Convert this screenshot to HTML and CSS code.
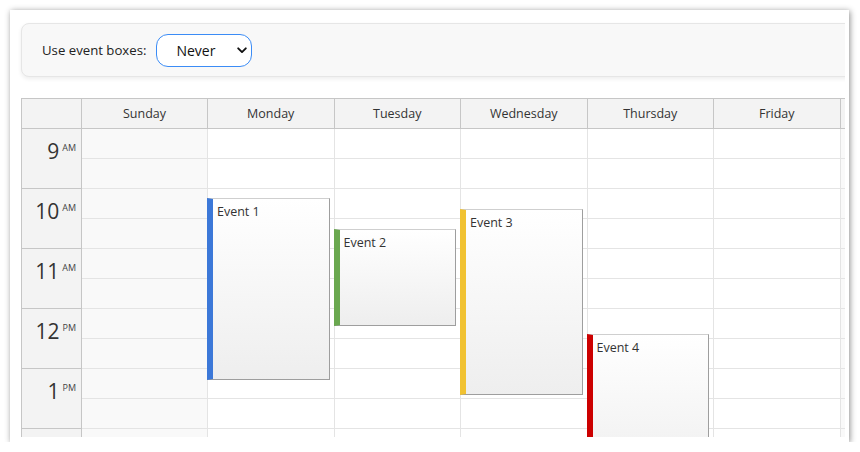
FILE: index.html
```html
<!DOCTYPE html>
<html lang="en">
<head>
    <meta charset="UTF-8">
    <meta name="viewport" content="width=device-width, initial-scale=1.0">
    <title>Calendar - Event Boxes</title>
    <link rel="stylesheet" href="styles.css">
</head>
<body>
    <div class="frame">
        <div class="viewport">
            <div class="page">
                <div class="toolbar">
                    <label for="boxes">Use event boxes:</label>
                    <span class="select-wrap">
                        <select id="boxes">
                            <option>Never</option>
                            <option>Always</option>
                        </select>
                        <svg class="chevron" width="10" height="7" viewBox="0 0 10 7">
                            <path d="M1.2 1.3 L5 5.1 L8.8 1.3" fill="none" stroke="#111" stroke-width="1.9" stroke-linecap="round" stroke-linejoin="round"/>
                        </svg>
                    </span>
                </div>

                <div class="calendar">
                    <div class="cal-head">
                        <div class="corner"></div>
                        <div class="day-head">Sunday</div>
                        <div class="day-head">Monday</div>
                        <div class="day-head">Tuesday</div>
                        <div class="day-head">Wednesday</div>
                        <div class="day-head">Thursday</div>
                        <div class="day-head">Friday</div>
                        <!-- saturday is scrolled out of view -->
                        <div class="day-head"></div>
                    </div>

                    <div class="cal-body">
                        <div class="time-col">
                            <div class="hour"><span class="h">9</span><span class="ampm">AM</span></div>
                            <div class="hour"><span class="h">10</span><span class="ampm">AM</span></div>
                            <div class="hour"><span class="h">11</span><span class="ampm">AM</span></div>
                            <div class="hour"><span class="h">12</span><span class="ampm">PM</span></div>
                            <div class="hour"><span class="h">1</span><span class="ampm">PM</span></div>
                            <div class="hour"></div>
                        </div>

                        <div class="day-col weekend">
                            <div class="slot"></div><div class="slot"></div><div class="slot"></div><div class="slot"></div>
                            <div class="slot"></div><div class="slot"></div><div class="slot"></div><div class="slot"></div>
                            <div class="slot"></div><div class="slot"></div><div class="slot"></div><div class="slot"></div>
                        </div>

                        <div class="day-col">
                            <div class="slot"></div><div class="slot"></div><div class="slot"></div><div class="slot"></div>
                            <div class="slot"></div><div class="slot"></div><div class="slot"></div><div class="slot"></div>
                            <div class="slot"></div><div class="slot"></div><div class="slot"></div><div class="slot"></div>
                            <div class="event blue" style="top: 69px; height: 182px;">Event 1</div>
                        </div>

                        <div class="day-col">
                            <div class="slot"></div><div class="slot"></div><div class="slot"></div><div class="slot"></div>
                            <div class="slot"></div><div class="slot"></div><div class="slot"></div><div class="slot"></div>
                            <div class="slot"></div><div class="slot"></div><div class="slot"></div><div class="slot"></div>
                            <div class="event green" style="top: 100px; height: 97px;">Event 2</div>
                        </div>

                        <div class="day-col">
                            <div class="slot"></div><div class="slot"></div><div class="slot"></div><div class="slot"></div>
                            <div class="slot"></div><div class="slot"></div><div class="slot"></div><div class="slot"></div>
                            <div class="slot"></div><div class="slot"></div><div class="slot"></div><div class="slot"></div>
                            <div class="event yellow" style="top: 80px; height: 186px;">Event 3</div>
                        </div>

                        <div class="day-col">
                            <div class="slot"></div><div class="slot"></div><div class="slot"></div><div class="slot"></div>
                            <div class="slot"></div><div class="slot"></div><div class="slot"></div><div class="slot"></div>
                            <div class="slot"></div><div class="slot"></div><div class="slot"></div><div class="slot"></div>
                            <div class="event red" style="top: 205px; height: 150px;">Event 4</div>
                        </div>

                        <div class="day-col">
                            <div class="slot"></div><div class="slot"></div><div class="slot"></div><div class="slot"></div>
                            <div class="slot"></div><div class="slot"></div><div class="slot"></div><div class="slot"></div>
                            <div class="slot"></div><div class="slot"></div><div class="slot"></div><div class="slot"></div>
                        </div>

                        <div class="day-col weekend">
                            <div class="slot"></div><div class="slot"></div><div class="slot"></div><div class="slot"></div>
                            <div class="slot"></div><div class="slot"></div><div class="slot"></div><div class="slot"></div>
                            <div class="slot"></div><div class="slot"></div><div class="slot"></div><div class="slot"></div>
                        </div>
                    </div>
                </div>
            </div>
        </div>
    </div>
</body>
</html>
```

FILE: styles.css
```css
:root {
    --text-color: #333;
    --head-bg: #f3f3f3;
    --weekend-bg: #f9f9f9;
    --head-line: #c6c6c6;
    --grid-line: #e4e4e4;
    --accent-color: #3b8cf6;
}

body {
    font-family: "Open Sans", "Noto Sans", sans-serif;
    color: var(--text-color);
    background-color: #fff;
    margin: 0;
    padding: 0;
}
.frame {
    margin: 10px 0 0 10px;
    width: 839px;
    height: 432px;
    background-color: #fff;
    box-shadow: 1px 1px 6px rgba(0, 0, 0, 0.45);
}
.viewport {
    width: 835px;
    height: 427px;
    overflow: hidden;
}
.page {
    width: 947px;
    padding: 13px 0 0 11px;
}

/* toolbar */
.toolbar {
    display: flex;
    align-items: center;
    gap: 10px;
    height: 54px;
    box-sizing: border-box;
    padding-left: 20px;
    background-color: #f8f8f8;
    border: 1px solid #e6e6e6;
    border-radius: 8px;
    box-shadow: 0 2px 4px rgba(0, 0, 0, 0.07);
    font-size: 13.2px;
    color: #222;
}
.select-wrap {
    position: relative;
    display: inline-block;
}
select {
    appearance: none;
    -webkit-appearance: none;
    width: 96px;
    height: 33px;
    padding: 0 0 0 19px;
    border: 1px solid var(--accent-color);
    border-radius: 12px;
    background-color: #fff;
    font-family: "Open Sans", "Noto Sans", sans-serif;
    font-size: 14px;
    color: #111;
    outline: none;
}
.chevron {
    position: absolute;
    right: 5px;
    top: 13px;
    pointer-events: none;
}

/* calendar */
.calendar {
    margin-top: 21px;
    border-top: 1px solid var(--head-line);
    border-left: 1px solid var(--head-line);
}
.cal-head, .cal-body {
    display: grid;
    grid-template-columns: 60px 126px repeat(6, 126.5px);
}
.corner, .day-head {
    height: 30px;
    box-sizing: border-box;
    background-color: var(--head-bg);
    border-right: 1px solid var(--head-line);
    border-bottom: 1px solid var(--head-line);
}
.day-head {
    display: flex;
    align-items: center;
    justify-content: center;
    font-size: 12.5px;
    color: #333;
}
.time-col {
    background-color: var(--head-bg);
    border-right: 1px solid var(--head-line);
}
.hour {
    height: 60px;
    box-sizing: border-box;
    border-bottom: 1px solid var(--head-line);
    display: flex;
    justify-content: flex-end;
    align-items: flex-start;
    padding: 10px 5px 0 0;
    gap: 3px;
}
.hour .h {
    font-size: 21px;
    line-height: 24px;
    color: #333;
}
.hour .ampm {
    font-size: 9px;
    line-height: 12px;
    padding-top: 3px;
    color: #444;
}
.day-col {
    position: relative;
    border-right: 1px solid var(--grid-line);
    background-color: #fff;
}
.day-col.weekend {
    background-color: var(--weekend-bg);
}
.slot {
    height: 30px;
    box-sizing: border-box;
    border-bottom: 1px solid var(--grid-line);
}

/* events */
.event {
    position: absolute;
    left: -1px;
    right: 4px;
    box-sizing: border-box;
    padding: 4px 0 0 4px;
    background: linear-gradient(#ffffff, #eeeeee);
    border: 1px solid #9e9e9e;
    border-top-color: #cfcfcf;
    border-left: 6px solid #999;
    font-size: 12.5px;
    color: #333;
}
.event.blue { border-left-color: #3c78d8; }
.event.green { border-left-color: #6aa84f; }
.event.yellow { border-left-color: #f1c232; }
.event.red { border-left-color: #cc0000; }
```
